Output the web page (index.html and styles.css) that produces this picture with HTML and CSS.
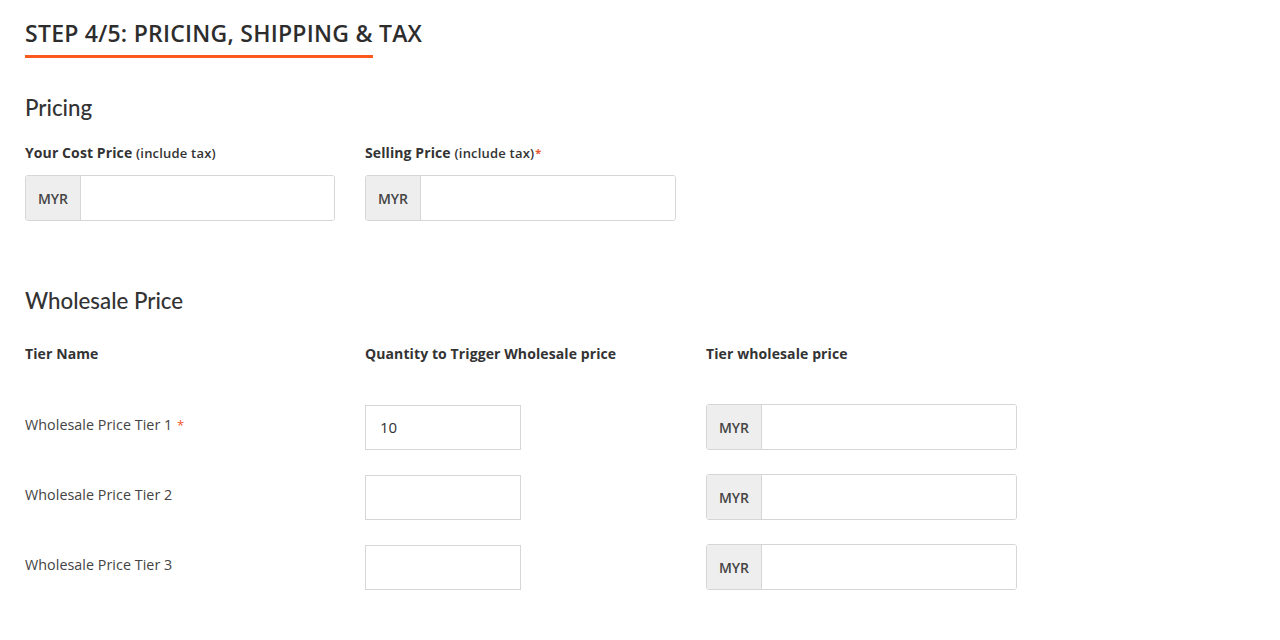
FILE: index.html
```html
<!DOCTYPE html>
<html>
<head>
<meta charset="utf-8">
<link rel="stylesheet" href="styles.css">
</head>
<body>
<div class="page">
  <h2 class="step-title">STEP 4/5: PRICING, SHIPPING &amp; TAX</h2>

  <h3 class="section-title">Pricing</h3>
  <div class="grid pricing">
    <div class="field">
      <label class="label">Your Cost Price <small>(include tax)</small></label>
      <div class="input-group">
        <span class="addon">MYR</span>
        <input class="control" type="text">
      </div>
    </div>
    <div class="field">
      <label class="label">Selling Price <small>(include tax)</small><span class="req">*</span></label>
      <div class="input-group">
        <span class="addon">MYR</span>
        <input class="control" type="text">
      </div>
    </div>
  </div>

  <h3 class="section-title wholesale-title">Wholesale Price</h3>
  <div class="grid table-head">
    <div class="label">Tier Name</div>
    <div class="label">Quantity to Trigger Wholesale price</div>
    <div class="label">Tier wholesale price</div>
  </div>
  <div class="grid tier-row">
    <div class="tier-name">Wholesale Price Tier 1 <span class="req">*</span></div>
    <input class="control qty" type="text" value="10">
    <div class="input-group">
      <span class="addon">MYR</span>
      <input class="control" type="text">
    </div>
  </div>
  <div class="grid tier-row">
    <div class="tier-name">Wholesale Price Tier 2</div>
    <input class="control qty" type="text">
    <div class="input-group">
      <span class="addon">MYR</span>
      <input class="control" type="text">
    </div>
  </div>
  <div class="grid tier-row">
    <div class="tier-name">Wholesale Price Tier 3</div>
    <input class="control qty" type="text">
    <div class="input-group">
      <span class="addon">MYR</span>
      <input class="control" type="text">
    </div>
  </div>
</div>
</body>
</html>
```

FILE: styles.css
```css
* { box-sizing: border-box; }
html, body { margin: 0; padding: 0; background: #fff; }
body {
  font-family: "Open Sans", "Liberation Sans", sans-serif;
  color: #333;
}
.page { padding: 17px 25px 0 25px; }

.step-title {
  position: relative;
  margin: 0;
  font-size: 23px;
  line-height: 32px;
  font-weight: 600;
  color: #2d2d2d;
  padding-bottom: 9px;
  letter-spacing: 0.25px;
}
.step-title::after {
  content: "";
  position: absolute;
  left: 0;
  bottom: 0;
  width: 348px;
  height: 3px;
  background: #fb5a1c;
}

.section-title {
  margin: 36px 0 0 0;
  font-family: Lato, "Open Sans", sans-serif;
  font-size: 22.3px;
  line-height: 28px;
  font-weight: 500;
  color: #333;
}
.wholesale-title { margin-top: 66px; }

.grid {
  display: grid;
  grid-template-columns: 310px 311px 311px;
  column-gap: 30px;
}
.pricing { margin-top: 21px; }

.label {
  display: block;
  font-size: 14px;
  line-height: 20px;
  font-weight: 700;
  color: #333;
  letter-spacing: 0.1px;
}
.label small { font-size: 13px; font-weight: 600; letter-spacing: 0.2px; }
.req { color: #f0542d; font-size: 11px; vertical-align: top; margin-left: 1px; }
.tier-name .req { font-size: 13px; }

.field .input-group { margin-top: 12px; }

.input-group {
  display: flex;
  height: 46px;
  border: 1px solid #d6d6d6;
  border-radius: 3px;
  overflow: hidden;
  background: #fff;
}
.addon {
  width: 55px;
  flex: none;
  display: flex;
  align-items: center;
  justify-content: center;
  background: #eeeeee;
  border-right: 1px solid #d6d6d6;
  font-size: 14px;
  font-weight: 600;
  color: #444;
}
.control {
  border: none;
  outline: none;
  flex: 1;
  min-width: 0;
  font-family: inherit;
  font-size: 15px;
  color: #333;
  padding: 0 14px;
  background: #fff;
}
.qty {
  width: 156px;
  height: 45px;
  border: 1px solid #d6d6d6;
  border-radius: 0;
}

.table-head { margin-top: 29px; }
.tier-row { align-items: center; }
.table-head + .tier-row { margin-top: 40px; }
.tier-row + .tier-row { margin-top: 24px; }

.tier-name {
  font-size: 14.3px;
  color: #444;
  line-height: 20px;
  margin-top: -4px;
  letter-spacing: 0.05px;
}
```
